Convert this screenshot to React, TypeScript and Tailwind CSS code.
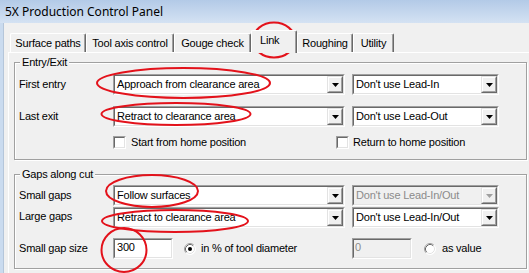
import React from "react";

function Arrow({ disabled }: { disabled?: boolean }) {
  return (
    <svg width="7" height="4" viewBox="0 0 7 4">
      <path d="M0 0H7L3.5 4Z" fill={disabled ? "#a0a0a0" : "#000"} />
    </svg>
  );
}

function DropBtn({ disabled }: { disabled?: boolean }) {
  return (
    <div className="h-full w-[16px] shrink-0 border border-t-[#e3e3e3] border-l-[#e3e3e3] border-r-[#696969] border-b-[#696969] bg-[#f0f0f0]">
      <div className="h-full w-full border border-t-white border-l-white border-r-[#a0a0a0] border-b-[#a0a0a0] flex items-center justify-center">
        <Arrow disabled={disabled} />
      </div>
    </div>
  );
}

function Sunken({
  className,
  innerClassName,
  children,
}: {
  className: string;
  innerClassName: string;
  children?: React.ReactNode;
}) {
  return (
    <div
      className={`border border-t-[#a0a0a0] border-l-[#a0a0a0] border-r-white border-b-white ${className}`}
    >
      <div
        className={`h-full w-full border border-t-[#696969] border-l-[#696969] border-r-[#e3e3e3] border-b-[#e3e3e3] ${innerClassName}`}
      >
        {children}
      </div>
    </div>
  );
}

function Combo({ w, text, disabled }: { w: string; text: string; disabled?: boolean }) {
  return (
    <Sunken
      className={`h-[21px] shrink-0 ${w}`}
      innerClassName={`flex items-center ${disabled ? "bg-[#f0f0f0] text-[#8b8b8b]" : "bg-white text-black"}`}
    >
      <span className="flex-1 pl-[2px] whitespace-nowrap overflow-hidden">{text}</span>
      <DropBtn disabled={disabled} />
    </Sunken>
  );
}

function Check() {
  return (
    <Sunken className="h-[13px] w-[13px] shrink-0" innerClassName="bg-white" />
  );
}

function Radio({ checked }: { checked?: boolean }) {
  return (
    <svg width="12" height="12" viewBox="0 0 12 12" className="shrink-0">
      <circle cx="6" cy="6" r="5.5" fill="#fff" />
      <path d="M2.11 9.89 A5.5 5.5 0 0 1 9.89 2.11" fill="none" stroke="#a0a0a0" strokeWidth="1" />
      <path d="M9.89 2.11 A5.5 5.5 0 0 1 2.11 9.89" fill="none" stroke="#ffffff" strokeWidth="1" />
      <path d="M2.82 9.18 A4.5 4.5 0 0 1 9.18 2.82" fill="none" stroke="#696969" strokeWidth="1" />
      <path d="M9.18 2.82 A4.5 4.5 0 0 1 2.82 9.18" fill="none" stroke="#e3e3e3" strokeWidth="1" />
      {checked && <circle cx="6" cy="6" r="2" fill="#000" />}
    </svg>
  );
}

function Tab({
  w,
  label,
  selected,
  start,
}: {
  w: string;
  label: string;
  selected?: boolean;
  start?: boolean;
}) {
  return (
    <div
      className={`${w} ${
        selected ? "h-[23px] mb-[-1px] relative z-10 pb-[3px]" : "h-[19px]"
      } ${start ? "justify-start pl-[8px]" : "justify-center"} shrink-0 flex items-center whitespace-nowrap bg-[#f0f0f0] border-t border-l border-r border-t-white border-l-white border-r-[#696969] shadow-[inset_-1px_0_0_#a0a0a0] rounded-t-[2px]`}
    >
      {label}
    </div>
  );
}

function Group({
  title,
  className,
  children,
}: {
  title: string;
  className: string;
  children?: React.ReactNode;
}) {
  return (
    <div
      className={`relative w-[513px] border border-[#a0a0a0] shadow-[inset_1px_1px_0_#fff,1px_1px_0_#fff] ${className}`}
    >
      <span className="absolute left-[5px] top-[-8px] bg-[#f0f0f0] px-[2px] leading-[14px]">
        {title}
      </span>
      {children}
    </div>
  );
}

export default function App() {
  return (
    <div className="relative w-[529px] h-[273px] overflow-hidden bg-[#f0f0f0] font-['Liberation_Sans',Arial,sans-serif] text-[11px] tracking-[-0.2px] text-black">
      <div className="h-[23px] bg-gradient-to-b from-[#b3cae7] to-[#d4e2f3] flex items-center pl-[5px] font-['Noto_Sans',sans-serif] text-[12px] tracking-normal text-black">
        5X Production Control Panel
      </div>
      <div className="flex h-[250px]">
        <div className="w-[4px] shrink-0 bg-[#cadbef] border-r border-r-[#b5c6da]" />
        <div className="flex-1 flex flex-col">
          <div className="h-[29px] flex items-end pl-[6px]">
            <Tab w="w-[76px]" label="Surface paths" />
            <Tab w="w-[88px]" label="Tool axis control" />
            <Tab w="w-[77px]" label="Gouge check" />
            <Tab w="w-[46px]" label="Link" selected start />
            <Tab w="w-[56px]" label="Roughing" />
            <Tab w="w-[41px]" label="Utility" />
          </div>
          <div className="ml-[4px] flex-1 border-t border-l border-t-white border-l-white pl-[5px] pt-[9px]">
            <Group title="Entry/Exit" className="pt-[11px] pl-[4px] pb-[10px]">
              <div className="flex items-center h-[21px]">
                <span className="w-[94px] shrink-0">First entry</span>
                <Combo w="w-[232px]" text="Approach from clearance area" />
                <div className="w-[7px] shrink-0" />
                <Combo w="w-[147px]" text="Don't use Lead-In" />
              </div>
              <div className="flex items-center h-[21px] mt-[11px]">
                <span className="w-[94px] shrink-0">Last exit</span>
                <Combo w="w-[232px]" text="Retract to clearance area" />
                <div className="w-[7px] shrink-0" />
                <Combo w="w-[147px]" text="Don't use Lead-Out" />
              </div>
              <div className="flex items-center h-[13px] mt-[9px]">
                <div className="w-[94px] shrink-0" />
                <div className="w-[223px] shrink-0 flex items-center gap-[5px]">
                  <Check />
                  <span>Start from home position</span>
                </div>
                <div className="flex items-center gap-[4px]">
                  <Check />
                  <span>Return to home position</span>
                </div>
              </div>
            </Group>
            <Group title="Gaps along cut" className="mt-[14px] pt-[10px] pl-[4px] pb-[9px]">
              <div className="flex items-center h-[21px]">
                <span className="w-[94px] shrink-0">Small gaps</span>
                <Combo w="w-[232px]" text="Follow surfaces" />
                <div className="w-[7px] shrink-0" />
                <Combo w="w-[147px]" text="Don't use Lead-In/Out" disabled />
              </div>
              <div className="flex items-center h-[21px] mt-[1px]">
                <span className="w-[94px] shrink-0 mt-[-3px]">Large gaps</span>
                <Combo w="w-[232px]" text="Retract to clearance area" />
                <div className="w-[7px] shrink-0" />
                <Combo w="w-[147px]" text="Don't use Lead-In/Out" />
              </div>
              <div className="flex items-center h-[21px] mt-[10px]">
                <span className="w-[94px] shrink-0">Small gap size</span>
                <div className="w-[239px] shrink-0 flex items-center">
                  <Sunken className="h-[21px] w-[60px] shrink-0" innerClassName="bg-white pl-[2px] leading-[15px]">
                    300
                  </Sunken>
                  <div className="w-[11px] shrink-0" />
                  <Radio checked />
                  <span className="ml-[5px] whitespace-nowrap">in % of tool diameter</span>
                </div>
                <Sunken className="h-[21px] w-[60px] shrink-0" innerClassName="bg-[#f0f0f0] text-[#8b8b8b] pl-[1px] leading-[15px]">
                  0
                </Sunken>
                <div className="w-[12px] shrink-0" />
                <Radio />
                <span className="ml-[6px] whitespace-nowrap">as value</span>
              </div>
            </Group>
          </div>
        </div>
      </div>
      <svg
        className="absolute inset-0 pointer-events-none"
        width="529"
        height="273"
        viewBox="0 0 529 273"
      >
        <g fill="none" stroke="#e3121b" strokeWidth="2">
          <ellipse cx="274" cy="40" rx="21" ry="17.5" />
          <ellipse cx="183.5" cy="83" rx="86.5" ry="15" />
          <ellipse cx="176" cy="114" rx="74.5" ry="11" />
          <ellipse cx="152" cy="191" rx="46" ry="16" />
          <ellipse cx="175" cy="221" rx="73" ry="11" />
          <ellipse cx="124" cy="250" rx="22.5" ry="22" />
        </g>
      </svg>
    </div>
  );
}
